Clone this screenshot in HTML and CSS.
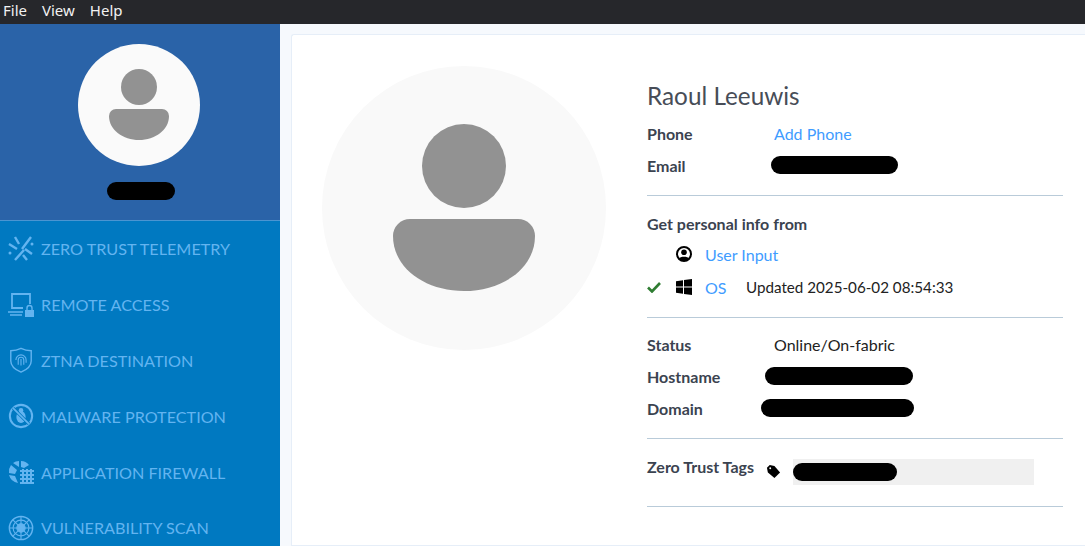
FILE: index.html
```html
<!DOCTYPE html>
<html lang="en">
<head>
    <meta charset="UTF-8">
    <title>User Details</title>
    <link rel="stylesheet" href="styles.css">
</head>
<body>
    <!-- Window menu -->
    <div class="menu-bar">
        <span>File</span>
        <span>View</span>
        <span>Help</span>
    </div>

    <div class="app">
        <!-- Sidebar -->
        <div class="sidebar">
            <div class="profile">
                <svg class="profile-avatar" viewBox="0 0 122 122">
                    <circle cx="61" cy="61" r="61" fill="#fafafa"/>
                    <circle cx="61" cy="43" r="18" fill="#929292"/>
                    <path d="M38 65h46a7 7 0 0 1 7 7c0 14-14 24-30 24s-30-10-30-24a7 7 0 0 1 7-7z" fill="#929292"/>
                </svg>
                <div class="redact redact-user"></div>
            </div>
            <div class="nav">
                <div class="nav-item">
                    <svg viewBox="0 0 26 26" fill="none" stroke="#63b4f0" stroke-width="2.4">
                        <path d="M7 1l4 7M23 1L14 13M1 8l8 5M24 18l-7-5M16 14L7 24M15 19l4 5"/>
                        <circle cx="24" cy="8" r="1.500" fill="#63b4f0" stroke="none"/>
                        <circle cx="2" cy="17" r="1.500" fill="#63b4f0" stroke="none"/>
                    </svg>
                    <span>ZERO TRUST TELEMETRY</span>
                </div>
                <div class="nav-item">
                    <svg viewBox="0 0 26 26" fill="none" stroke="#63b4f0" stroke-width="1.800">
                        <path d="M15 16H4V2h18v10"/>
                        <path d="M0 20h15M2 23h12" stroke-width="1.600"/>
                        <rect x="17" y="18" width="9" height="7" fill="#63b4f0" stroke="none"/>
                        <path d="M19 18v-2a2.500 2.500 0 0 1 5 0v2" stroke-width="1.400"/>
                    </svg>
                    <span>REMOTE ACCESS</span>
                </div>
                <div class="nav-item">
                    <svg viewBox="0 0 28 28" fill="none" stroke="#63b4f0" stroke-width="1.500">
                        <path d="M14 1.500c4 2 7 2.500 11 2.500v11c0 6-5 9.500-11 12-6-2.500-11-6-11-12V4c4 0 7-.5 11-2.500z"/>
                        <path d="M8.500 14a5.500 5.500 0 0 1 11 0v3M11 19v-5a3 3 0 0 1 6 0v5M14 13v7" stroke-width="1.200"/>
                    </svg>
                    <span>ZTNA DESTINATION</span>
                </div>
                <div class="nav-item">
                    <svg viewBox="0 0 28 28" fill="none" stroke="#63b4f0" stroke-width="2.200">
                        <circle cx="14" cy="14" r="12"/>
                        <ellipse cx="14" cy="15" rx="5" ry="6.500" fill="#63b4f0" stroke="none"/>
                        <circle cx="14" cy="8" r="2.500" fill="#63b4f0" stroke="none"/>
                        <path d="M5.500 5.500l17 17" stroke="#0079c1" stroke-width="3.500"/>
                        <path d="M5.500 5.500l17 17" stroke-width="1.800"/>
                    </svg>
                    <span>MALWARE PROTECTION</span>
                </div>
                <div class="nav-item">
                    <svg viewBox="0 0 26 26" fill="none" stroke="#63b4f0">
                        <path d="M5 4a11 11 0 0 1 6-2v6zM13 2a11 11 0 0 1 8 4l-5 3-3-1zM3 6l6 5-2 4-6-1a11 11 0 0 1 2-8zM1 16l6 1 3 7a11 11 0 0 1-9-8z" fill="#63b4f0" stroke="none"/>
                        <path d="M12 12h14M12 16h14M12 20h14M12 24h14M15 10v15M19 10v15M23 10v15" stroke-width="2"/>
                    </svg>
                    <span>APPLICATION FIREWALL</span>
                </div>
                <div class="nav-item">
                    <svg viewBox="0 0 28 28" fill="none" stroke="#63b4f0" stroke-width="1.200">
                        <circle cx="14" cy="14" r="12.500" stroke-width="1.600"/>
                        <circle cx="14" cy="14" r="8.500"/>
                        <circle cx="14" cy="14" r="4.500" fill="#63b4f0"/>
                        <path d="M14 1.500v25M1.500 14h25M5 5l18 18M23 5L5 23"/>
                    </svg>
                    <span>VULNERABILITY SCAN</span>
                </div>
            </div>
        </div>

        <!-- User details -->
        <div class="main">
            <div class="panel">
                <svg class="user-avatar" viewBox="0 0 284 284">
                    <circle cx="142" cy="142" r="142" fill="#f9f9f9"/>
                    <circle cx="142" cy="100" r="42" fill="#929292"/>
                    <path d="M88 153h108a17 17 0 0 1 17 17c0 32-32 55-71 55s-71-23-71-55a17 17 0 0 1 17-17z" fill="#929292"/>
                </svg>

                <div class="details">
                    <h1>Raoul Leeuwis</h1>
                    <div class="row">
                        <label>Phone</label>
                        <a>Add Phone</a>
                    </div>
                    <div class="row">
                        <label>Email</label>
                        <div class="redact redact-email"></div>
                    </div>

                    <div class="section info-section">
                        <div class="row title-row"><label class="wide">Get personal info from</label></div>
                        <div class="source">
                            <span class="check"></span>
                            <svg class="source-icon" viewBox="0 0 16 16">
                                <circle cx="8" cy="8" r="7" fill="none" stroke="#000" stroke-width="2"/>
                                <circle cx="8" cy="6.200" r="2.800"/>
                                <path d="M3 12.500c1-2.500 9-2.500 10 0l-2 2H5z"/>
                            </svg>
                            <a>User Input</a>
                        </div>
                        <div class="source">
                            <svg class="check" viewBox="0 0 14 12">
                                <path d="M1 6.500l4 4 8-8.500" fill="none" stroke="#2f7d32" stroke-width="2.600"/>
                            </svg>
                            <svg class="source-icon" viewBox="0 0 16 16">
                                <path d="M0 2.300l7-1v6.300H0zM8 1.100L16 0v7.600H8zM0 8.500h7v6.300l-7-1zM8 8.500h8V16l-8-1.100z"/>
                            </svg>
                            <a class="os-link">OS</a>
                            <span class="updated">Updated 2025-06-02 08:54:33</span>
                        </div>
                    </div>

                    <div class="section status-section">
                        <div class="row">
                            <label>Status</label>
                            <span>Online/On-fabric</span>
                        </div>
                        <div class="row">
                            <label>Hostname</label>
                            <div class="redact redact-host"></div>
                        </div>
                        <div class="row">
                            <label>Domain</label>
                            <div class="redact redact-domain"></div>
                        </div>
                    </div>

                    <div class="section tags-section">
                        <label class="wide">Zero Trust Tags</label>
                        <svg class="tag-icon" viewBox="0 0 16 16">
                            <path d="M1 4l3-3 5 1 6 7-6 6-7-6z"/>
                            <circle cx="4.500" cy="4.500" r="1" fill="#fff"/>
                        </svg>
                        <div class="tag-box">
                            <div class="redact redact-tag"></div>
                        </div>
                    </div>
                </div>
            </div>
        </div>
    </div>
</body>
</html>
```

FILE: styles.css
```css
html, body {
    height: 100%;
}
body {
    margin: 0;
    overflow: hidden;
    font-family: Lato, sans-serif;
    font-size: 16px;
    color: #3b4350;
    background-color: #f6f9fd;
}
.menu-bar {
    display: flex;
    gap: 15px;
    height: 24px;
    padding-left: 3px;
    line-height: 20px;
    font-family: "Noto Sans", sans-serif;
    font-size: 15px;
    color: #f2f2f2;
    background-color: #26272b;
}
.app {
    display: flex;
    height: 522px;
}

/* Sidebar */
.sidebar {
    width: 280px;
    flex-shrink: 0;
    background-color: #0079c1;
    overflow: hidden;
}
.profile {
    display: flex;
    flex-direction: column;
    align-items: center;
    height: 197px;
    padding-top: 20px;
    box-sizing: border-box;
    background-color: #2a63a8;
    border-bottom: 1px solid #4a95d2;
}
.profile-avatar {
    width: 122px;
    height: 122px;
    margin-right: 2px;
}
.nav-item {
    display: flex;
    align-items: center;
    gap: 7px;
    height: 55.8px;
    padding-left: 8px;
    font-size: 16.2px;
    color: #63b4f0;
}
.nav-item svg {
    width: 26px;
    height: 26px;
    flex-shrink: 0;
}

/* Redacted values */
.redact {
    background-color: #000;
    border-radius: 9px;
    height: 18px;
}
.redact-user {
    width: 68px;
    margin-top: 16px;
    margin-left: 2px;
}
.redact-email {
    width: 127px;
    margin-left: -3px;
}
.redact-host {
    width: 148px;
    margin-left: -9px;
}
.redact-domain {
    width: 153px;
    margin-left: -13px;
}
.redact-tag {
    width: 104px;
}

/* Main panel */
.main {
    flex: 1;
    padding: 10px 0 0 11px;
}
.panel {
    display: flex;
    height: 100%;
    box-sizing: border-box;
    padding: 31px 22px 0 30px;
    background-color: #fff;
    border: 1px solid #e6eef8;
    border-right: none;
    border-radius: 3px 0 0 0;
}
.user-avatar {
    width: 284px;
    height: 284px;
    flex-shrink: 0;
}
.details {
    flex: 1;
    margin-left: 41px;
}
h1 {
    height: 36px;
    margin: 0 0 15px;
    font-size: 24.3px;
    font-weight: 400;
    line-height: 60px;
    color: #474d57;
}
.row {
    display: flex;
    align-items: center;
    height: 32px;
    color: #222;
}
label {
    width: 127px;
    flex-shrink: 0;
    font-weight: 700;
    color: #3b4350;
}
label.wide {
    width: auto;
    white-space: nowrap;
}
a {
    color: #3f9cff;
}
.section {
    border-top: 1px solid #b9cbd9;
}
.info-section {
    margin-top: 14px;
    padding-top: 12px;
}
.title-row {
    height: 30px;
}
.status-section {
    margin-top: 14px;
    padding-top: 10px;
}
.source {
    display: flex;
    align-items: center;
    height: 32px;
}
.source + .source {
    margin-top: 1px;
}
.check {
    width: 14px;
    height: 12px;
    margin-right: 15px;
    flex-shrink: 0;
}
.source-icon {
    width: 16px;
    height: 16px;
    margin-right: 13px;
    flex-shrink: 0;
}
.os-link {
    width: 41px;
}
.updated {
    font-size: 15.2px;
    color: #222;
}
.tags-section {
    display: flex;
    align-items: flex-start;
    height: 69px;
    padding-top: 20px;
    box-sizing: border-box;
    margin-top: 14px;
    border-bottom: 1px solid #b9cbd9;
}
.tags-section label {
    margin-top: -2px;
}
.tag-icon {
    width: 15px;
    height: 15px;
    margin: 5px 0 0 12px;
    flex-shrink: 0;
}
.tag-box {
    display: flex;
    align-items: center;
    width: 241px;
    height: 26px;
    margin-left: 12px;
    background-color: #f0f0f0;
}
```
